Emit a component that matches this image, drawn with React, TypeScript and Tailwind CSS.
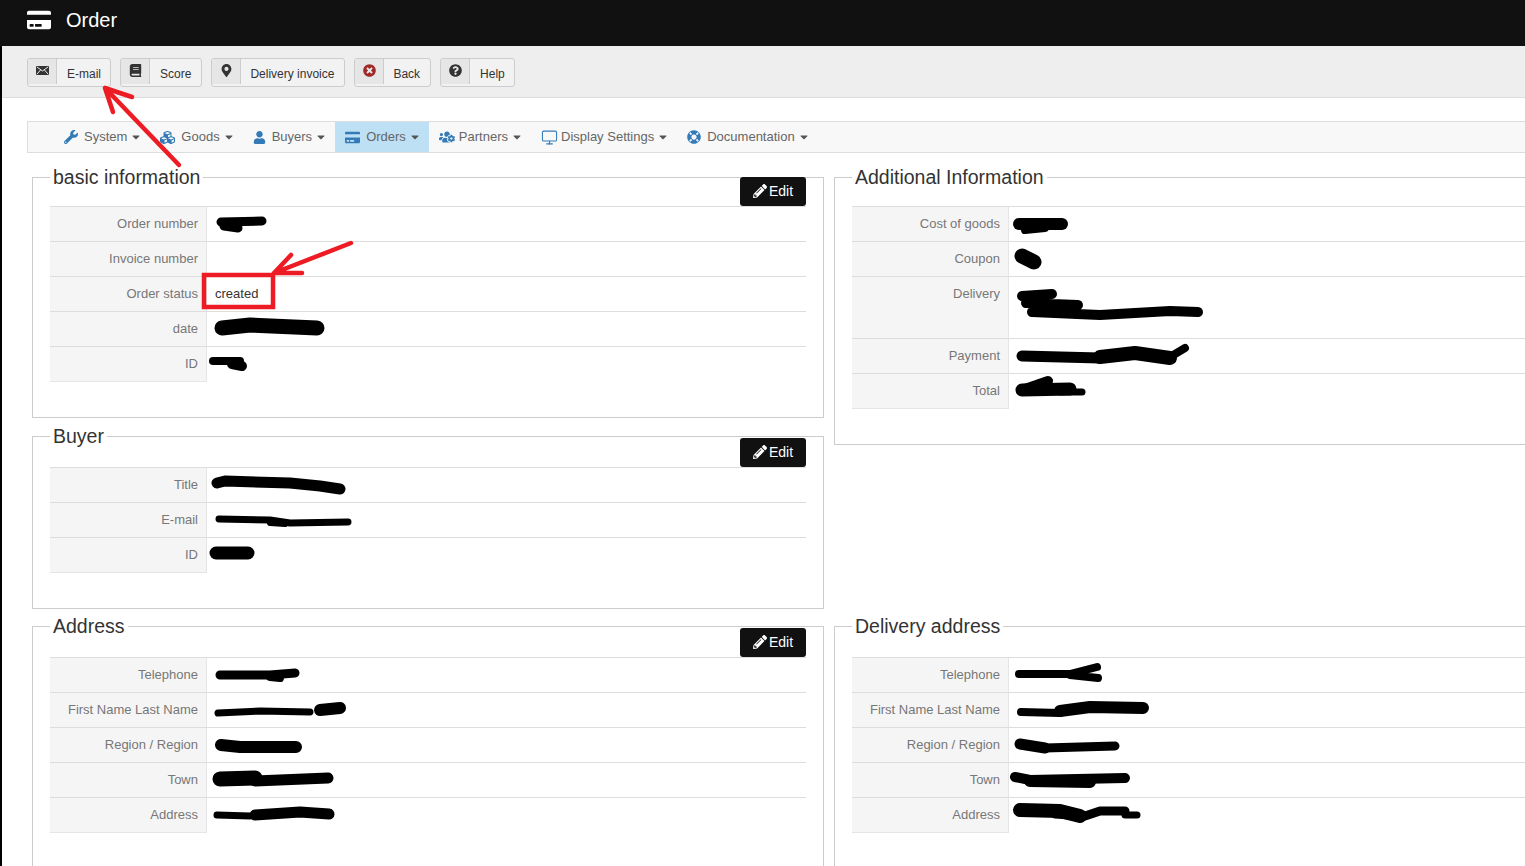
import type { ReactNode } from "react";
import {
  FaBook,
  FaCaretDown,
  FaCreditCard,
  FaCubes,
  FaLifeRing,
  FaMapMarkerAlt,
  FaPencilAlt,
  FaQuestionCircle,
  FaTimesCircle,
  FaUser,
  FaUsersCog,
  FaWrench,
} from "react-icons/fa";
import { Monitor } from "lucide-react";

const MailIcon = () => (
  <svg className="mt-[2px]" width="13" height="9" viewBox="0 0 13 9">
    <rect width="13" height="9" rx="1" fill="#333" />
    <path d="M1 1 L6.5 5 L12 1 M1 8 L4.5 4 M12 8 L8.5 4" stroke="#eee" strokeWidth="1" fill="none" />
  </svg>
);

const toolbar = [
  { label: "E-mail", icon: <MailIcon />, text: "pl-[10px] pr-[9px] pt-[6px] leading-[18px]" },
  { label: "Score", icon: <FaBook className="text-[13px] text-[#333]" />, text: "pl-[10px] pr-[10px] pt-[6px] leading-[18px]" },
  { label: "Delivery invoice", icon: <FaMapMarkerAlt className="text-[13px] text-[#333]" />, text: "pl-[9px] pr-[10px] pt-[6px] leading-[18px]" },
  { label: "Back", icon: <FaTimesCircle className="text-[13px] text-[#a02a2a]" />, text: "pl-[9px] pr-[10px] pt-[6px] leading-[18px]" },
  { label: "Help", icon: <FaQuestionCircle className="text-[13px] text-[#333]" />, text: "pl-[10px] pr-[9px] pt-[6px] leading-[18px]" },
];

const menu = [
  { label: "System", icon: <FaWrench className="text-[14px]" />, box: "w-[20px]" },
  { label: "Goods", icon: <FaCubes className="text-[15px]" />, box: "w-[21px]" },
  { label: "Buyers", icon: <FaUser className="text-[13px]" />, box: "w-[19px]" },
  { label: "Orders", icon: <FaCreditCard className="text-[15px]" />, box: "w-[21px]", active: true },
  { label: "Partners", icon: <FaUsersCog className="text-[16px]" />, box: "w-[20px]" },
  { label: "Display Settings", icon: <Monitor size={17} strokeWidth={1.5} />, box: "w-[20px]" },
  { label: "Documentation", icon: <FaLifeRing className="text-[14px]" />, box: "w-[20px]" },
];

// marker strokes the person drew over private data, page coordinates
const scribbles = [
  { d: "M221 222 L262 221", w: 9 },
  { d: "M224 226 L238 228", w: 9 },
  { d: "M222 328 L250 325 L317 328", w: 15 },
  { d: "M213 361 L240 361", w: 8 },
  { d: "M232 364 L242 366", w: 10 },
  { d: "M217 483 L225 481 L290 483 L320 486 L340 489", w: 11 },
  { d: "M219 519 L270 520 L290 523 L348 522", w: 7 },
  { d: "M270 523 L285 524", w: 6 },
  { d: "M216 553 L248 553", w: 13 },
  { d: "M220 675 L270 675 L295 673", w: 9 },
  { d: "M270 677 L280 678", w: 8 },
  { d: "M218 713 L260 711 L310 712", w: 7 },
  { d: "M320 710 L340 708", w: 12 },
  { d: "M221 745 L240 747 L296 747", w: 12 },
  { d: "M220 779 L255 778", w: 15 },
  { d: "M255 781 L328 778", w: 11 },
  { d: "M217 815 L250 816", w: 7 },
  { d: "M255 815 L300 812 L329 814", w: 11 },
  { d: "M1019 224 L1062 224", w: 12 },
  { d: "M1025 230 L1045 228", w: 8 },
  { d: "M1022 256 L1034 262", w: 15 },
  { d: "M1022 296 L1052 294 M1026 303 L1078 305 M1032 312 L1100 315 L1170 311 L1198 312", w: 10 },
  { d: "M1022 356 L1100 358", w: 11 },
  { d: "M1100 357 L1135 353 L1170 358", w: 14 },
  { d: "M1170 357 L1185 348", w: 8 },
  { d: "M1022 390 L1048 381", w: 10 },
  { d: "M1022 390 L1070 389", w: 13 },
  { d: "M1060 392 L1082 392", w: 7 },
  { d: "M1019 674 L1070 674 L1097 667 M1070 675 L1098 678", w: 8 },
  { d: "M1021 712 L1060 713", w: 8 },
  { d: "M1060 711 L1090 707 L1143 708", w: 12 },
  { d: "M1020 744 L1045 748", w: 11 },
  { d: "M1045 748 L1115 746", w: 9 },
  { d: "M1015 777 L1030 780 L1125 778", w: 10 },
  { d: "M1030 781 L1090 782", w: 12 },
  { d: "M1020 810 L1060 811 L1080 816", w: 14 },
  { d: "M1055 814 L1085 816 L1100 811 L1125 811", w: 9 },
  { d: "M1125 815 L1137 815", w: 7 },
];

const Row = ({ label, value, tall }: { label: string; value?: string; tall?: boolean }) => (
  <div className="flex border-t border-[#ddd] text-[13px] leading-[19px]">
    <div className="w-[157px] shrink-0 border-r border-[#e5e5e5] bg-[#f5f5f5] py-[7px] pr-2 text-right text-[#777]">
      {label}
    </div>
    <div className={tall ? "h-[61px] py-[7px] pl-2 text-[#333]" : "h-[34px] py-[7px] pl-2 text-[#333]"}>{value}</div>
  </div>
);

const Box = ({
  title,
  edit,
  className,
  children,
}: {
  title: string;
  edit?: ReactNode;
  className: string;
  children: ReactNode;
}) => (
  <fieldset className={`relative w-[792px] shrink-0 border border-[#ccc] px-[17px] ${className}`}>
    <legend className="px-[3px] text-[19.5px] leading-[22px] text-[#333]">{title}</legend>
    {edit}
    {children}
    <div className="h-px w-[157px] bg-[#e5e5e5]" />
  </fieldset>
);

const EditButton = ({ className }: { className: string }) => (
  <button
    className={`absolute right-[17px] flex h-[29px] w-[66px] items-center justify-center gap-[2px] rounded-[3px] bg-[#111] text-[14px] text-white ${className}`}
  >
    <FaPencilAlt className="mb-[2px] text-[14px]" />
    Edit
  </button>
);

export default function App() {
  return (
    <div className="relative h-[866px] w-[1525px] overflow-hidden bg-black font-['Liberation_Sans',Arial,sans-serif]">
      <header className="flex h-[46px] items-start gap-[15px] bg-[#111] pl-[27px] pt-[8px] text-white">
        <FaCreditCard className="text-[24px]" />
        <h1 className="text-[20px] leading-[24px]">Order</h1>
      </header>

      <div className="ml-[2px] h-[820px] bg-white">
        <div className="flex h-[52px] gap-[9px] border-b border-[#ddd] bg-[#eee] pl-[25px] pt-[12px]">
          {toolbar.map((b) => (
            <div key={b.label} className="flex h-[29px] rounded-[3px] border border-[#ccc] bg-[#f2f2f2] text-[12px] text-[#333]">
              <span className="flex h-[25px] w-[29px] items-start justify-center rounded-tl-[3px] border-r border-[#ccc] bg-[#e6e6e6] pt-[5px]">
                {b.icon}
              </span>
              <span className={b.text}>{b.label}</span>
            </div>
          ))}
        </div>

        <nav className="ml-[25px] mt-[23px] flex h-[32px] border-y border-l border-[#ddd] bg-[#f8f8f8] pl-[26px] text-[13px] text-[#666]">
          {menu.map((m) => (
            <div key={m.label} className={m.active ? "flex items-center bg-[#bde0f5] px-[10px]" : "flex items-center px-[10px]"}>
              <span className={`${m.box} text-[#337ab7]`}>{m.icon}</span>
              {m.label}
              <FaCaretDown className="ml-[5px] w-[8px] text-[12px] text-[#555]" />
            </div>
          ))}
        </nav>

        <div className="mt-[13px] flex gap-[10px] pl-[30px]">
          <div className="flex shrink-0 flex-col">
            <Box title="basic information" className="mb-[7px] pt-[18px] pb-[35px]" edit={<EditButton className="top-[-11px]" />}>
              <Row label="Order number" />
              <Row label="Invoice number" />
              <Row label="Order status" value="created" />
              <Row label="date" />
              <Row label="ID" />
            </Box>
            <Box title="Buyer" className="mb-[6px] pt-[20px] pb-[35px]" edit={<EditButton className="top-[-9px]" />}>
              <Row label="Title" />
              <Row label="E-mail" />
              <Row label="ID" />
            </Box>
            <Box title="Address" className="pt-[20px] pb-[60px]" edit={<EditButton className="top-[-9px]" />}>
              <Row label="Telephone" />
              <Row label="First Name Last Name" />
              <Row label="Region / Region" />
              <Row label="Town" />
              <Row label="Address" />
            </Box>
          </div>
          <div className="flex shrink-0 flex-col gap-[170px]">
            <Box title="Additional Information" className="pt-[18px] pb-[35px]">
              <Row label="Cost of goods" />
              <Row label="Coupon" />
              <Row label="Delivery" tall />
              <Row label="Payment" />
              <Row label="Total" />
            </Box>
            <Box title="Delivery address" className="pt-[20px] pb-[60px]">
              <Row label="Telephone" />
              <Row label="First Name Last Name" />
              <Row label="Region / Region" />
              <Row label="Town" />
              <Row label="Address" />
            </Box>
          </div>
        </div>
      </div>

      {/* annotations painted on top of the screenshot */}
      <svg className="pointer-events-none absolute left-0 top-0" width="1525" height="866" fill="none" strokeLinecap="round" strokeLinejoin="round">
        {scribbles.map((s) => (
          <path key={s.d} d={s.d} stroke="#000" strokeWidth={s.w} />
        ))}
        <g stroke="#ed1c24" strokeWidth="4.5">
          <path d="M179 165 L105 88 M105 88 L132 97 M105 88 L113 112" />
          <path d="M351 243 L274 273 M274 273 L291 255 M274 273 L302 273" />
          <rect x="204" y="275" width="69" height="32" strokeLinejoin="miter" />
        </g>
      </svg>
    </div>
  );
}
